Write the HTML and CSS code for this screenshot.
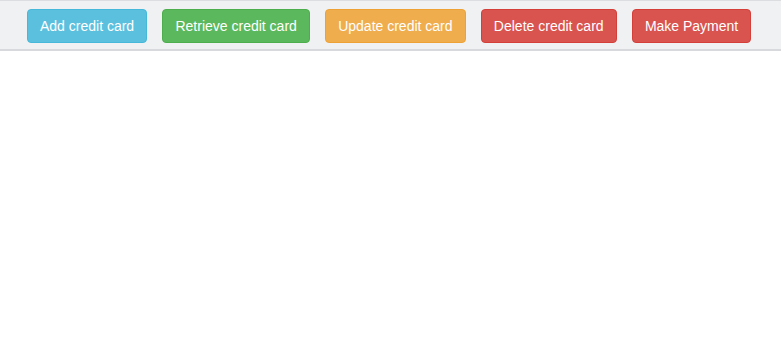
FILE: index.html
```html
<!DOCTYPE html>
<html>
<head>
<meta charset="utf-8">
<link rel="stylesheet" href="styles.css">
</head>
<body>
<nav class="toolbar">
  <button class="btn btn-info">Add credit card</button>
  <button class="btn btn-success">Retrieve credit card</button>
  <button class="btn btn-warning">Update credit card</button>
  <button class="btn btn-danger">Delete credit card</button>
  <button class="btn btn-danger">Make Payment</button>
</nav>
</body>
</html>
```
FILE: styles.css
```css
html, body {
  margin: 0;
  padding: 0;
  background: #fff;
  font-family: "Liberation Sans", Arial, sans-serif;
}
.toolbar {
  display: flex;
  gap: 15.3px;
  align-items: flex-start;
  padding: 8px 27px 6px;
  background: #f0f1f3;
  border-top: 1px solid #dcdde0;
  border-bottom: 2px solid #d8d9dc;
}
.btn {
  font-family: "Liberation Sans", Arial, sans-serif;
  font-size: 14px;
  line-height: 20px;
  padding: 6px 12px;
  height: 34px;
  border: 1px solid transparent;
  border-radius: 4px;
  color: #fff;
  cursor: pointer;
  white-space: nowrap;
}
.btn-info { background: #5bc0de; border-color: #46b8da; }
.btn-success { background: #5cb85c; border-color: #4cae4c; }
.btn-warning { background: #f0ad4e; border-color: #eea236; }
.btn-danger { background: #d9534f; border-color: #d43f3a; }
```
